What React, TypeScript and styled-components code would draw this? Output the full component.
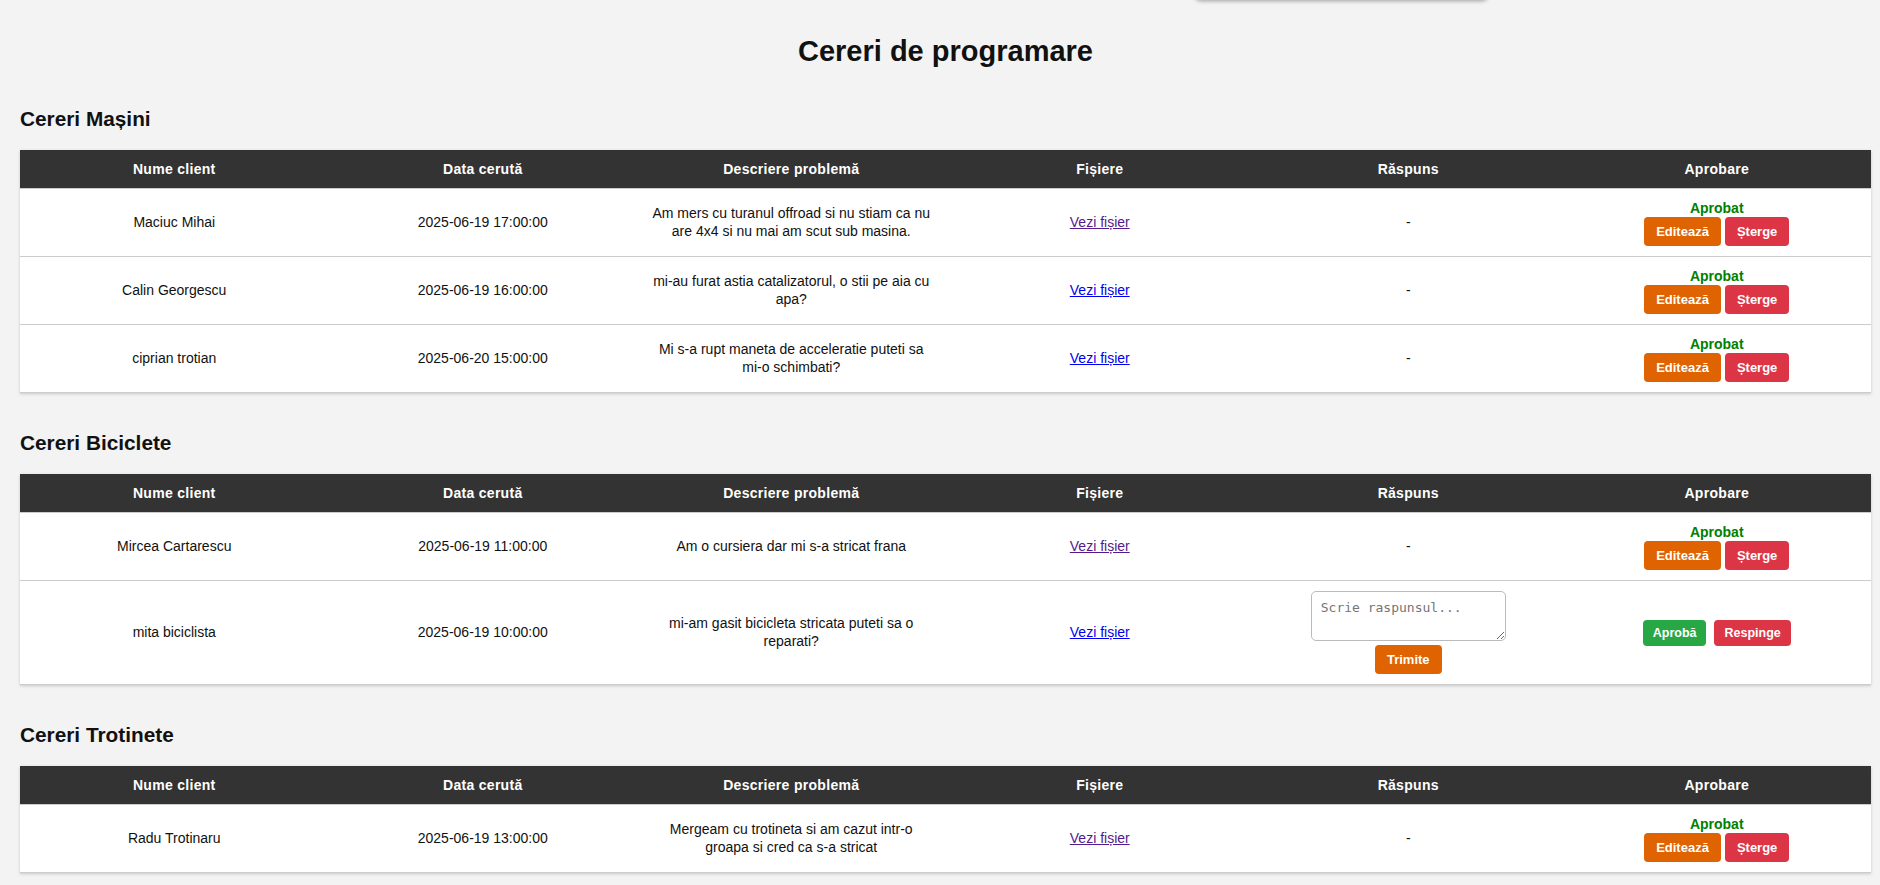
import React from "react";
import styled, { createGlobalStyle } from "styled-components";

const GlobalStyle = createGlobalStyle`
  html, body { margin: 0; padding: 0; }
  body {
    background: #f3f3f3;
    font-family: "Liberation Sans", Arial, sans-serif;
    color: #111;
  }
`;

const Page = styled.div`
  padding: 35px 9px 6px 20px;
`;

const HiddenPanel = styled.div`
  position: fixed;
  top: -60px;
  left: 1195px;
  width: 293px;
  height: 60px;
  background: #fff;
  border-radius: 6px;
  box-shadow: 0 1px 4px rgba(0, 0, 0, 0.35);
`;

const Title = styled.h1`
  margin: 0 0 39px;
  font-size: 29px;
  line-height: 33px;
  text-align: center;
  font-weight: bold;
  color: #111;
`;

const Section = styled.section`
  margin-bottom: 38px;
  &:last-child { margin-bottom: 0; }
`;

const SectionTitle = styled.h2`
  margin: 0 0 19px;
  font-size: 20.8px;
  line-height: 24px;
  font-weight: bold;
  color: #111;
`;

const Table = styled.table`
  width: 100%;
  border-collapse: collapse;
  table-layout: fixed;
  background: #fff;
  box-shadow: 0 1px 3px rgba(0, 0, 0, 0.18);
`;

const HeadRow = styled.tr`
  border-bottom: 1px solid #ccc;
`;

const Th = styled.th`
  background: #333;
  color: #fff;
  font-size: 14px;
  font-weight: bold;
  letter-spacing: 0.3px;
  line-height: 18px;
  padding: 10px 12px;
  text-align: center;
`;

const Row = styled.tr`
  border-bottom: 1px solid #ccc;
`;

const Td = styled.td`
  padding: 10px 12px;
  font-size: 14px;
  line-height: 1.25;
  text-align: center;
  vertical-align: middle;
  color: #111;
`;

const FileLink = styled.a<{ $visited?: boolean }>`
  color: ${(p) => (p.$visited ? "#551a8b" : "#0000ee")};
  text-decoration: underline;
  font-size: 14px;
`;

const ActionCell = styled.div`
  display: flex;
  flex-direction: column;
  align-items: center;
`;

const Status = styled.div`
  color: #008000;
  font-weight: bold;
  font-size: 14px;
  line-height: 18px;
`;

const ButtonRow = styled.div<{ $gap: number }>`
  display: flex;
  justify-content: center;
  gap: ${(p) => p.$gap}px;
`;

const Button = styled.button<{ $tone: "orange" | "red" | "green"; $small?: boolean }>`
  border: none;
  border-radius: 4px;
  color: #fff;
  font-family: "Liberation Sans", Arial, sans-serif;
  font-weight: bold;
  font-size: ${(p) => (p.$small ? "12.5px" : "13px")};
  line-height: ${(p) => (p.$small ? "14px" : "15px")};
  padding: ${(p) => (p.$small ? "6px 10px" : "7px 12px")};
  cursor: pointer;
  background: ${(p) =>
    p.$tone === "orange" ? "#df6300" : p.$tone === "red" ? "#dc3545" : "#28a745"};
`;

const ReplyCell = styled.div`
  display: flex;
  flex-direction: column;
  align-items: center;
  gap: 4px;
`;

const ReplyArea = styled.textarea`
  box-sizing: border-box;
  width: 195px;
  height: 50px;
  padding: 8px 9px;
  border: 1px solid #bbb;
  border-radius: 5px;
  font-family: "DejaVu Sans Mono", "Liberation Mono", monospace;
  font-size: 13px;
  line-height: 15px;
  color: #333;
  background: #fff;
  &::placeholder { color: #757575; }
`;

type Req = {
  name: string;
  date: string;
  desc: string;
  visited?: boolean;
  approved: boolean;
};

const sections: { title: string; rows: Req[] }[] = [
  {
    title: "Cereri Mașini",
    rows: [
      {
        name: "Maciuc Mihai",
        date: "2025-06-19 17:00:00",
        desc: "Am mers cu turanul offroad si nu stiam ca nu are 4x4 si nu mai am scut sub masina.",
        visited: true,
        approved: true,
      },
      {
        name: "Calin Georgescu",
        date: "2025-06-19 16:00:00",
        desc: "mi-au furat astia catalizatorul, o stii pe aia cu apa?",
        approved: true,
      },
      {
        name: "ciprian trotian",
        date: "2025-06-20 15:00:00",
        desc: "Mi s-a rupt maneta de acceleratie puteti sa mi-o schimbati?",
        approved: true,
      },
    ],
  },
  {
    title: "Cereri Biciclete",
    rows: [
      {
        name: "Mircea Cartarescu",
        date: "2025-06-19 11:00:00",
        desc: "Am o cursiera dar mi s-a stricat frana",
        visited: true,
        approved: true,
      },
      {
        name: "mita biciclista",
        date: "2025-06-19 10:00:00",
        desc: "mi-am gasit bicicleta stricata puteti sa o reparati?",
        approved: false,
      },
    ],
  },
  {
    title: "Cereri Trotinete",
    rows: [
      {
        name: "Radu Trotinaru",
        date: "2025-06-19 13:00:00",
        desc: "Mergeam cu trotineta si am cazut intr-o groapa si cred ca s-a stricat",
        visited: true,
        approved: true,
      },
    ],
  },
];

const headers = ["Nume client", "Data cerută", "Descriere problemă", "Fișiere", "Răspuns", "Aprobare"];

function RequestRow({ r }: { r: Req }) {
  return (
    <Row>
      <Td>{r.name}</Td>
      <Td>{r.date}</Td>
      <Td>{r.desc}</Td>
      <Td>
        <FileLink href="#" $visited={r.visited} onClick={(e) => e.preventDefault()}>
          Vezi fișier
        </FileLink>
      </Td>
      <Td>
        {r.approved ? (
          "-"
        ) : (
          <ReplyCell>
            <ReplyArea placeholder="Scrie raspunsul..." />
            <Button $tone="orange">Trimite</Button>
          </ReplyCell>
        )}
      </Td>
      <Td>
        {r.approved ? (
          <ActionCell>
            <Status>Aprobat</Status>
            <ButtonRow $gap={4}>
              <Button $tone="orange">Editează</Button>
              <Button $tone="red">Șterge</Button>
            </ButtonRow>
          </ActionCell>
        ) : (
          <ButtonRow $gap={8}>
            <Button $tone="green" $small>
              Aprobă
            </Button>
            <Button $tone="red" $small>
              Respinge
            </Button>
          </ButtonRow>
        )}
      </Td>
    </Row>
  );
}

export default function App() {
  return (
    <>
      <GlobalStyle />
      <HiddenPanel />
      <Page>
        <Title>Cereri de programare</Title>
        {sections.map((s) => (
          <Section key={s.title}>
            <SectionTitle>{s.title}</SectionTitle>
            <Table>
              <thead>
                <HeadRow>
                  {headers.map((h) => (
                    <Th key={h}>{h}</Th>
                  ))}
                </HeadRow>
              </thead>
              <tbody>
                {s.rows.map((r) => (
                  <RequestRow key={r.name} r={r} />
                ))}
              </tbody>
            </Table>
          </Section>
        ))}
      </Page>
    </>
  );
}
